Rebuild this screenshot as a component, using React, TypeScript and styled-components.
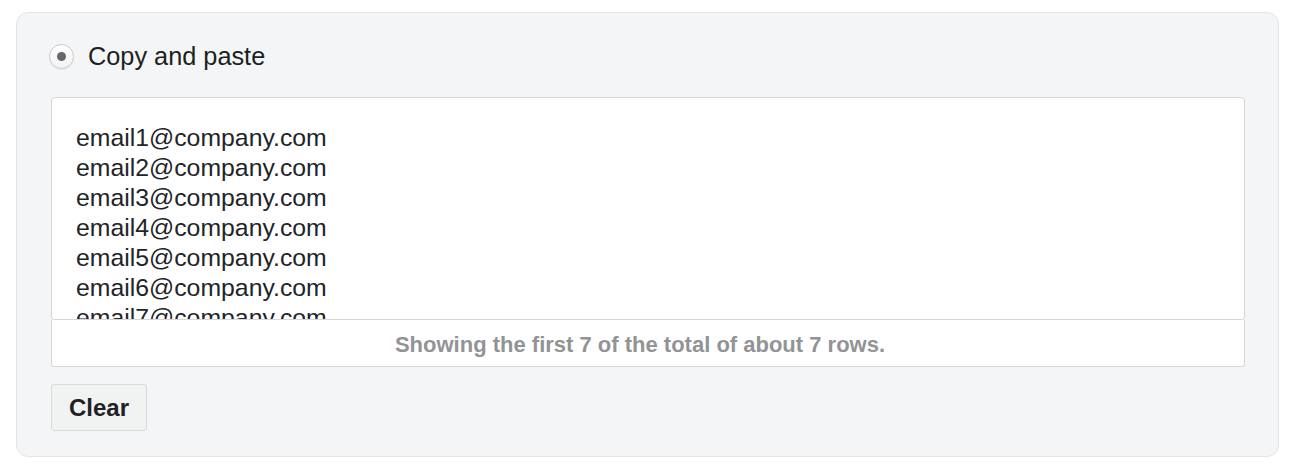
import styled, { createGlobalStyle } from 'styled-components';

const GlobalStyle = createGlobalStyle`
  html, body {
    margin: 0;
    padding: 0;
    background: #ffffff;
  }
  body {
    font-family: "Liberation Sans", Arial, sans-serif;
    color: #222428;
  }
`;

const Panel = styled.section`
  box-sizing: border-box;
  width: 1263px;
  height: 445px;
  margin: 12px 0 0 16px;
  padding: 30px 33px 0 34px;
  background: #f4f5f6;
  border: 1px solid #e4e5e6;
  border-radius: 12px;
`;

const OptionRow = styled.label`
  display: flex;
  align-items: center;
  gap: 14px;
  height: 26px;
  margin-left: -2px;
  cursor: pointer;
`;

const Radio = styled.span<{ checked?: boolean }>`
  box-sizing: border-box;
  display: flex;
  align-items: center;
  justify-content: center;
  width: 25px;
  height: 25px;
  border-radius: 50%;
  border: 1px solid #c9cacc;
  background: linear-gradient(#ffffff, #f3f3f3);
  box-shadow: 0 1px 1px rgba(0, 0, 0, 0.06);

  &::after {
    content: '';
    display: ${(p) => (p.checked ? 'block' : 'none')};
    width: 9px;
    height: 9px;
    border-radius: 50%;
    background: #65686d;
  }
`;

const OptionLabel = styled.span`
  font-size: 25.3px;
  color: #1d1f22;
`;

const Field = styled.div`
  margin-top: 28px;
  display: flex;
  flex-direction: column;
`;

const EmailArea = styled.textarea`
  box-sizing: border-box;
  display: block;
  width: 100%;
  height: 223px;
  margin: 0;
  padding: 25px 24px 0 24px;
  font-family: "Liberation Sans", Arial, sans-serif;
  font-size: 24.8px;
  line-height: 30px;
  color: #222428;
  background: #ffffff;
  border: 1px solid #d6d7d8;
  border-radius: 4px 4px 3px 3px;
  overflow: hidden;
  resize: none;
  outline: none;
`;

const Footer = styled.div`
  box-sizing: border-box;
  display: flex;
  align-items: center;
  justify-content: center;
  height: 47px;
  padding: 3px 16px 0 0;
  background: #ffffff;
  border: 1px solid #d6d7d8;
  border-top: none;
  border-radius: 0 0 3px 3px;
  font-size: 22px;
  font-weight: 700;
  color: #929396;
`;

const Button = styled.button`
  box-sizing: border-box;
  display: block;
  margin-top: 17px;
  width: 96px;
  height: 47px;
  padding: 0;
  font-family: "Liberation Sans", Arial, sans-serif;
  font-size: 24px;
  font-weight: 700;
  color: #1f2124;
  background: #f1f2f2;
  border: 1px solid #d8d9da;
  border-radius: 3px;
  cursor: pointer;
`;

const emails = Array.from({ length: 7 }, (_, i) => `email${i + 1}@company.com`);

export default function App() {
  return (
    <>
      <GlobalStyle />
      <Panel>
        <OptionRow>
          <Radio checked />
          <OptionLabel>Copy and paste</OptionLabel>
        </OptionRow>
        <Field>
          <EmailArea readOnly value={emails.join('\n')} />
          <Footer>Showing the first 7 of the total of about 7 rows.</Footer>
        </Field>
        <Button>Clear</Button>
      </Panel>
    </>
  );
}
